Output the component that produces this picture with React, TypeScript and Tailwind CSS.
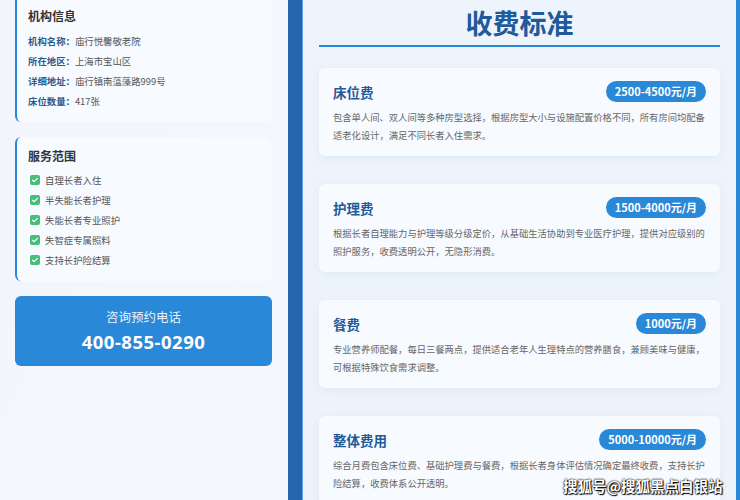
import React from "react";

const font = { fontFamily: '"Noto Sans CJK SC", "Noto Sans", sans-serif' };

const info = [
  ["机构名称：", "庙行悦馨敬老院"],
  ["所在地区：", "上海市宝山区"],
  ["详细地址：", "庙行镇南蕰藻路999号"],
  ["床位数量：", "417张"],
];

const services = ["自理长者入住", "半失能长者护理", "失能长者专业照护", "失智症专属照料", "支持长护险结算"];

const fees = [
  {
    name: "床位费",
    price: "2500-4500元/月",
    desc: "包含单人间、双人间等多种房型选择，根据房型大小与设施配置价格不同，所有房间均配备适老化设计，满足不同长者入住需求。",
  },
  {
    name: "护理费",
    price: "1500-4000元/月",
    desc: "根据长者自理能力与护理等级分级定价，从基础生活协助到专业医疗护理，提供对应级别的照护服务，收费透明公开，无隐形消费。",
  },
  {
    name: "餐费",
    price: "1000元/月",
    desc: "专业营养师配餐，每日三餐两点，提供适合老年人生理特点的营养膳食，兼顾美味与健康，可根据特殊饮食需求调整。",
  },
  {
    name: "整体费用",
    price: "5000-10000元/月",
    desc: "综合月费包含床位费、基础护理费与餐费，根据长者身体评估情况确定最终收费，支持长护险结算，收费体系公开透明。",
  },
];

function Check() {
  return (
    <span className="flex h-[10px] w-[10px] shrink-0 items-center justify-center rounded-[2px] bg-[#48bd78]">
      <svg width="8" height="8" viewBox="0 0 8 8" fill="none">
        <path d="M1.6 4.2 3.2 5.7 6.4 2.4" stroke="white" strokeWidth="1.2" strokeLinecap="round" strokeLinejoin="round" />
      </svg>
    </span>
  );
}

export default function App() {
  return (
    <div style={font} className="relative flex h-[500px] w-[740px] overflow-hidden">
      {/* left column */}
      <aside className="flex w-[288px] shrink-0 flex-col gap-[15px] bg-gradient-to-br from-[#f2f6fc] to-[#f4f8fd] pl-[15px] pr-[16px]">
        <div className="-mt-[10px] rounded-[6px] border-l-2 border-[#2a88d8] bg-[#f7faff] pl-[11px] pt-[18px] pb-[11px]">
          <h3 className="text-[12px] font-bold leading-[16px] text-[#333]">机构信息</h3>
          <div className="mt-[7px]">
            {info.map(([k, v]) => (
              <div key={k} className="text-[9.4px] leading-[20px]">
                <span className="font-bold text-[#2b5b8e]">{k}</span>
                <span className="text-[#555]">{v}</span>
              </div>
            ))}
          </div>
        </div>

        <div className="rounded-[6px] border-l-2 border-[#2a88d8] bg-[#f7faff] pl-[11px] pt-[11px] pb-[11px]">
          <h3 className="text-[12px] font-bold leading-[16px] text-[#333]">服务范围</h3>
          <ul className="mt-[6px]">
            {services.map((s) => (
              <li key={s} className="flex items-center gap-[5px] pl-[2px] text-[9.4px] leading-[20px] text-[#555]">
                <Check />
                {s}
              </li>
            ))}
          </ul>
        </div>

        <div className="flex h-[70px] flex-col items-center justify-center rounded-[6px] bg-[#2a88d8] text-white">
          <div className="text-[12.5px] leading-[18px] text-[#e8f2fc]">咨询预约电话</div>
          <div className="mt-[4px] text-[18.5px] font-bold leading-[24px] tracking-[0.5px]" style={{ fontFamily: '"Open Sans", "Noto Sans", sans-serif' }}>
            400-855-0290
          </div>
        </div>
      </aside>

      {/* divider bar */}
      <div className="w-[15px] shrink-0 border-r border-[#5fa3e3] bg-[#2466ad]" />

      {/* right column */}
      <main className="flex-1 bg-gradient-to-b from-[#eef4fb] to-[#edf3fb] px-[16px]">
        <h1 className="pt-[7px] text-center text-[27px] font-bold leading-[32px] text-[#1f5a9a]">收费标准</h1>
        <div className="mt-[6px] h-[2px] bg-[#2a88d8]" />
        <div className="mt-[21px] flex flex-col gap-[28px]">
          {fees.map((f) => (
            <section key={f.name} className="rounded-[6px] bg-[#f7faff] px-[14px] pt-[13px] pb-[12px] shadow-[0_2px_8px_rgba(42,120,200,0.08)]">
              <div className="flex h-[21px] items-center justify-between">
                <h2 className="text-[13.5px] font-bold leading-[20px] text-[#1f5a9a]">{f.name}</h2>
                <span className="flex h-[21px] items-center rounded-full bg-[#2a88d8] px-[9px] text-[11px] font-bold text-white">
                  {f.price}
                </span>
              </div>
              <p className="mt-[6px] text-[9.3px] leading-[18px] text-[#666]">{f.desc}</p>
            </section>
          ))}
        </div>
      </main>

      <div className="w-[4px] shrink-0 bg-[#2a88d8]" />

      {/* watermark */}
      <div className="absolute left-[563px] top-[476px] text-[14.5px] font-bold leading-[20px] text-white [text-shadow:0_0_1px_#000,0_0_2px_#000,1px_1px_1px_#000]">
        搜狐号@搜狐黑点白银站
      </div>
    </div>
  );
}
